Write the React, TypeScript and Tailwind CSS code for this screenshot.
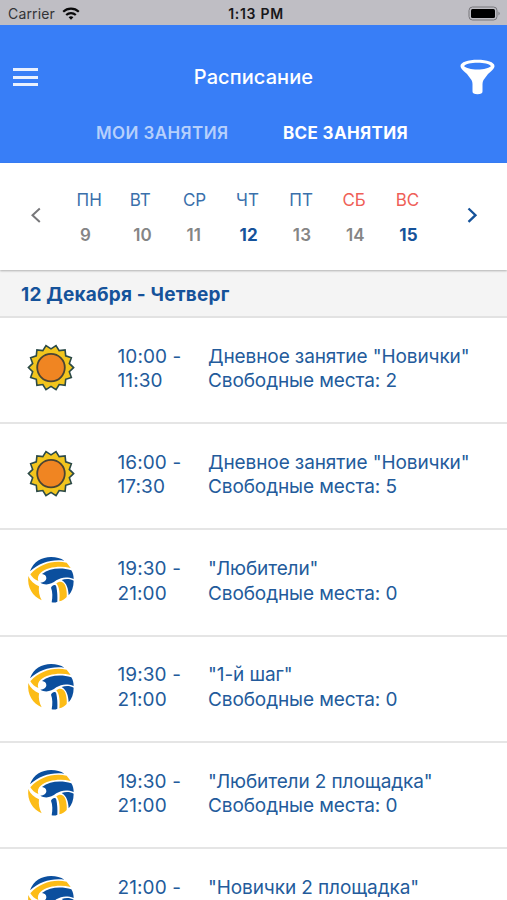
import React from "react";

const days = [
  { label: "ПН", date: 9 },
  { label: "ВТ", date: 10 },
  { label: "СР", date: 11 },
  { label: "ЧТ", date: 12, active: true },
  { label: "ПТ", date: 13 },
  { label: "СБ", date: 14, weekend: true },
  { label: "ВС", date: 15, weekend: true, active: true },
];

const lessons = [
  { icon: "sun", from: "10:00 -", to: "11:30", title: 'Дневное занятие "Новички"', seats: 2 },
  { icon: "sun", from: "16:00 -", to: "17:30", title: 'Дневное занятие "Новички"', seats: 5 },
  { icon: "ball", from: "19:30 -", to: "21:00", title: '"Любители"', seats: 0 },
  { icon: "ball", from: "19:30 -", to: "21:00", title: '"1-й шаг"', seats: 0 },
  { icon: "ball", from: "19:30 -", to: "21:00", title: '"Любители 2 площадка"', seats: 0 },
  { icon: "ball", from: "21:00 -", title: '"Новички 2 площадка"' },
];

const sunRays = Array.from({ length: 28 }, (_, i) => {
  const r = i % 2 === 0 ? 22.6 : 18.8;
  const a = (i * Math.PI) / 14;
  return `${(24 + r * Math.cos(a)).toFixed(2)},${(23.6 + r * Math.sin(a)).toFixed(2)}`;
}).join(" ");

function Sun() {
  return (
    <svg className="size-12" viewBox="0 0 48 48">
      <polygon points={sunRays} fill="#f2c51d" stroke="#2c4a48" strokeWidth="1.6" />
      <circle cx="24" cy="23.6" r="13.8" fill="#f08522" stroke="#4a4434" strokeWidth="1.8" />
    </svg>
  );
}

function Ball() {
  return (
    <svg className="size-12" viewBox="0 0 144 144">
      <path d="M9 46C19 17 44 3 72 3C88 3 102 7 112 14C74 9 38 20 9 46Z" fill="#0b4f9e" />
      <path d="M10 55C38 24 78 12 119 20L131 36C96 28 62 34 41 50C33 57 31 66 34 75C23 71 15 64 10 55Z" fill="#fcbc17" />
      <path d="M4 60C10 75 22 84 36 91C34 106 37 120 44 133C17 121 0 95 4 60Z" fill="#fcbc17" />
      <path d="M45 54C68 36 103 33 133 43C138 51 140 60 140 69C119 61 103 64 88 73C73 86 54 89 40 80C51 79 58 74 58 66C58 60 53 55 45 54Z" fill="#0b4f9e" />
      <path d="M72 95C76 87 85 84 88 92C91 107 92 122 91 137C86 140 80 140 74 139C77 123 77 108 72 95Z" fill="#0b4f9e" />
      <path d="M88 82C98 73 110 77 115 89C119 102 120 112 119 123C113 130 106 134 97 136C99 115 98 94 88 82Z" fill="#fcbc17" />
      <path d="M104 72C118 67 131 69 140 74C140 93 134 108 125 118C124 97 119 81 104 72Z" fill="#0b4f9e" />
    </svg>
  );
}

export default function App() {
  return (
    <div className="h-[900px] w-[507px] overflow-hidden bg-white font-['Inter','Liberation_Sans',sans-serif] text-[#235b9b]">
      <div className="grid h-[25px] grid-cols-3 items-center bg-[#bfbec4] pr-[6px] pl-[8px] pt-[2px] text-[#18181a]">
        <div className="flex items-center gap-[7px] text-[14px] tracking-[0.15px] text-[#333336]">
          Carrier
          <svg className="h-[13px] w-[18px]" viewBox="0 0 18 13" fill="none" stroke="#09090a" strokeWidth="2.2">
            <path d="M1.2 4.8a11.4 11.4 0 0 1 15.6 0" />
            <path d="M4.2 8a7 7 0 0 1 9.6 0" />
            <path d="M6.6 10.2a3.7 3.7 0 0 1 4.8 0L9 12.7Z" fill="#09090a" stroke="none" />
          </svg>
        </div>
        <div className="pl-[3px] text-center text-[14px] font-semibold tracking-[0.7px]">1:13 PM</div>
        <svg className="h-[15px] w-[33px] justify-self-end" viewBox="0 0 33 15">
          <rect x="1" y="1" width="28" height="13" rx="3.5" fill="none" stroke="#77767b" />
          <rect x="3" y="3" width="24" height="9" rx="1.5" fill="#000" />
          <path d="M30.5 5.5q2.4 2 0 4Z" fill="#77767b" />
        </svg>
      </div>

      <header className="h-[138px] bg-[#387ef7] text-white">
        <div className="flex h-[84px] items-center justify-between pt-[20px] pr-[12px] pl-[13px]">
          <div className="flex w-[34px] flex-col gap-[4.5px]">
            <span className="h-[3px] w-[25px] bg-[#e9f0fe]" />
            <span className="h-[3px] w-[25px] bg-[#e9f0fe]" />
            <span className="h-[3px] w-[25px] bg-[#e9f0fe]" />
          </div>
          <h1 className="text-[20px] font-medium tracking-[0.08px]">Расписание</h1>
          <svg className="h-[36px] w-[35px]" viewBox="0 0 35 36" fill="white">
            <path fillRule="evenodd" d="M.5 7C.5 3.2 8 .8 17.5.8S34.5 3.2 34.5 7C34.5 10 31 12 28 15L23.5 21Q22.5 23 22.5 25V32.5Q22.5 35.2 17.5 35.2T12.5 32.5V25Q12.5 23 11.5 21L7 15C4 12 .5 10 .5 7ZM4 7.2C6 8.8 11 10.6 17.5 10.6S29 8.8 31 7.2C29 4.8 24 3.8 17.5 3.8S6 4.8 4 7.2Z" />
          </svg>
        </div>
        <nav className="flex pt-[13px] pl-[96px] text-[17px] leading-[22px] whitespace-nowrap">
          <span className="w-[187px] font-semibold tracking-[0.4px] text-[#b6d0fc]">МОИ ЗАНЯТИЯ</span>
          <span className="font-bold tracking-[0.35px]">ВСЕ ЗАНЯТИЯ</span>
        </nav>
      </header>

      <section className="relative flex h-[107px] pt-[25px] shadow-[0_1px_2px_rgba(0,0,0,0.28)]">
        <div className="flex w-[76.5px] pt-[19px] pl-[30px]">
          <svg className="h-4 w-3" viewBox="0 0 12 16" fill="none" stroke="#77777a" strokeWidth="2"><path d="M9.8 1.5 2.5 8.2l7.3 6.7" /></svg>
        </div>
        {days.map((d) => (
          <div key={d.date} className="w-[53.2px] whitespace-nowrap">
            <div className={`text-[17px] leading-[25px] ${d.weekend ? "text-[#ef5f57]" : "text-[#3a70ab]"}`}>{d.label}</div>
            <div className={`mt-[10px] pl-[3.5px] text-[17px] leading-[24px] tracking-[0.2px] ${d.active ? "font-bold text-[#15529a]" : "font-semibold text-[#858585]"}`}>{d.date}</div>
          </div>
        ))}
        <svg className="mt-[19px] ml-[17px] h-4 w-3" viewBox="0 0 12 16" fill="none" stroke="#15529a" strokeWidth="2.3"><path d="m2.5 1.5 7 6.7-7 6.7" /></svg>
      </section>

      <h2 className="flex h-[48px] items-center border-b-2 border-[#e2e2e2] bg-[#f4f4f4] pt-[4px] pl-[21px] text-[19px] font-bold tracking-[0.2px] text-[#15529a]">12 Декабря - Четверг</h2>

      <main>
        {lessons.map((l, i) => (
          <article key={i} className="flex h-[106.2px] border-b-2 border-[#e5e5e5] pt-[26px] pl-[27px] text-[19px] leading-[24.5px] whitespace-nowrap">
            <div className="w-[90.5px]">{l.icon === "sun" ? <Sun /> : <Ball />}</div>
            <div className="w-[90.5px] pt-[0.8px] tracking-[0.1px]"><div>{l.from}</div><div>{l.to}</div></div>
            <div className="pt-[0.8px] tracking-[-0.1px]"><div>{l.title}</div>{l.seats !== undefined && <div>Свободные места: {l.seats}</div>}</div>
          </article>
        ))}
      </main>
    </div>
  );
}
